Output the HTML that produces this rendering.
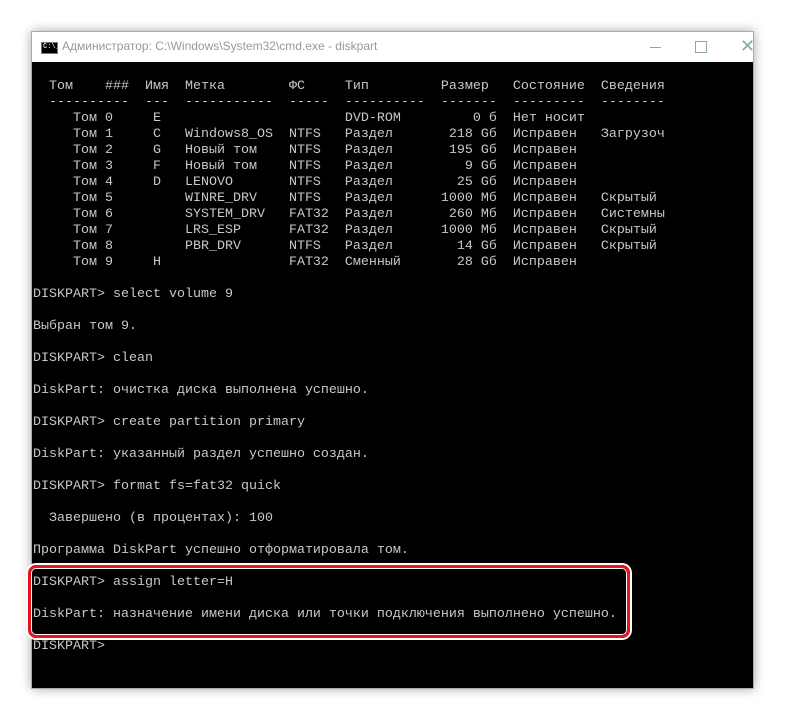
<!DOCTYPE html>
<html><head><meta charset="utf-8"><style>
html,body{margin:0;padding:0;background:#fff;width:785px;height:719px;overflow:hidden;position:relative}
.win{position:absolute;left:31px;top:31px;width:721px;height:656px;background:#fff;border:1px solid #aaa;box-shadow:0 0 10px rgba(0,0,0,.35)}
.title{position:absolute;left:0;top:0;right:0;height:30px;background:#fff}
.ttext{position:absolute;left:30px;top:7px;font:12px "Liberation Sans","DejaVu Sans",sans-serif;color:#999;white-space:nowrap}
.icon{position:absolute;left:9px;top:10px;width:15px;height:10px;background:#000;border:1px solid #777}
.icon span{position:absolute;left:1px;top:0;font:bold 7px "Liberation Mono",monospace;color:#ccc;line-height:9px}
.con{position:absolute;left:0;top:30px;width:721px;height:626px;background:#000;overflow:hidden}
pre{margin:0;position:absolute;left:1px;top:17px;font:13.33px/16px "Liberation Mono","DejaVu Sans Mono",monospace;color:#c8c8c8}
.box{position:absolute;left:28px;top:565px;width:596px;height:67px;border:3px solid #e8141c;border-radius:8px;box-shadow:0 0 0 2px #fff, inset 0 0 0 1px #fff}
</style></head><body>
<div class="win">
<div class="title">
<div class="icon"><span>C:\_</span></div>
<div class="ttext">Администратор: C:\Windows\System32\cmd.exe - diskpart</div>
<div style="position:absolute;left:618px;top:15px;width:11px;height:1px;background:#8a9"></div>
<div style="position:absolute;left:663px;top:9px;width:10px;height:10px;border:1px solid #8a9"></div>
<div style="position:absolute;left:708px;top:4px;font:18px 'Liberation Sans',sans-serif;color:#8a9">✕</div>
</div>
<div class="con"><pre>
  Том    ###  Имя  Метка        ФС     Тип         Размер   Состояние  Сведения
  ----------  ---  -----------  -----  ----------  -------  ---------  --------
     Том 0     E                       DVD-ROM         0 б  Нет носит
     Том 1     C   Windows8_OS  NTFS   Раздел       218 Gб  Исправен   Загрузоч
     Том 2     G   Новый том    NTFS   Раздел       195 Gб  Исправен
     Том 3     F   Новый том    NTFS   Раздел         9 Gб  Исправен
     Том 4     D   LENOVO       NTFS   Раздел        25 Gб  Исправен
     Том 5         WINRE_DRV    NTFS   Раздел      1000 Мб  Исправен   Скрытый
     Том 6         SYSTEM_DRV   FAT32  Раздел       260 Мб  Исправен   Системны
     Том 7         LRS_ESP      FAT32  Раздел      1000 Мб  Исправен   Скрытый
     Том 8         PBR_DRV      NTFS   Раздел        14 Gб  Исправен   Скрытый
     Том 9     H                FAT32  Сменный       28 Gб  Исправен

DISKPART> select volume 9

Выбран том 9.

DISKPART> clean

DiskPart: очистка диска выполнена успешно.

DISKPART> create partition primary

DiskPart: указанный раздел успешно создан.

DISKPART> format fs=fat32 quick

  Завершено (в процентах): 100

Программа DiskPart успешно отформатировала том.

DISKPART> assign letter=H

DiskPart: назначение имени диска или точки подключения выполнено успешно.

DISKPART>
</pre></div>
</div>
<div class="box"></div>
</body></html>
